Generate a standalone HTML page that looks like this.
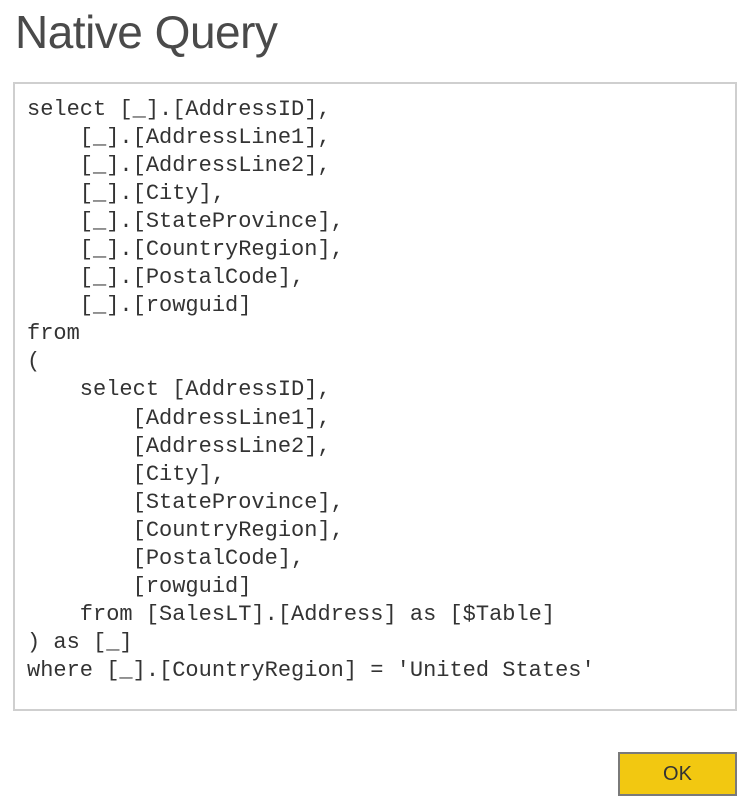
<!DOCTYPE html>
<html><head><style>
html,body{margin:0;padding:0;background:#fff;width:751px;height:807px;overflow:hidden}
.t{position:absolute;left:15px;top:2px;font-family:"Liberation Sans",sans-serif;font-size:46px;color:#4a4a4a;letter-spacing:-0.5px;line-height:60px}
.box{position:absolute;left:13px;top:82px;width:720px;height:625px;border:2px solid #cfcfcf}
pre{position:absolute;left:27px;top:96px;margin:0;font-family:"Liberation Mono",monospace;font-size:22px;line-height:28.05px;color:#333}
.ok{position:absolute;left:618px;top:752px;width:115px;height:40px;border:2px solid #7a7a7a;background:#F2C811;font-family:"Liberation Sans",sans-serif;font-size:20px;color:#333;text-align:center;line-height:40px}
</style></head><body>
<div class="t">Native Query</div>
<div class="box"></div>
<pre>select [_].[AddressID],
    [_].[AddressLine1],
    [_].[AddressLine2],
    [_].[City],
    [_].[StateProvince],
    [_].[CountryRegion],
    [_].[PostalCode],
    [_].[rowguid]
from
(
    select [AddressID],
        [AddressLine1],
        [AddressLine2],
        [City],
        [StateProvince],
        [CountryRegion],
        [PostalCode],
        [rowguid]
    from [SalesLT].[Address] as [$Table]
) as [_]
where [_].[CountryRegion] = 'United States'</pre>
<div class="ok">OK</div>
</body></html>
